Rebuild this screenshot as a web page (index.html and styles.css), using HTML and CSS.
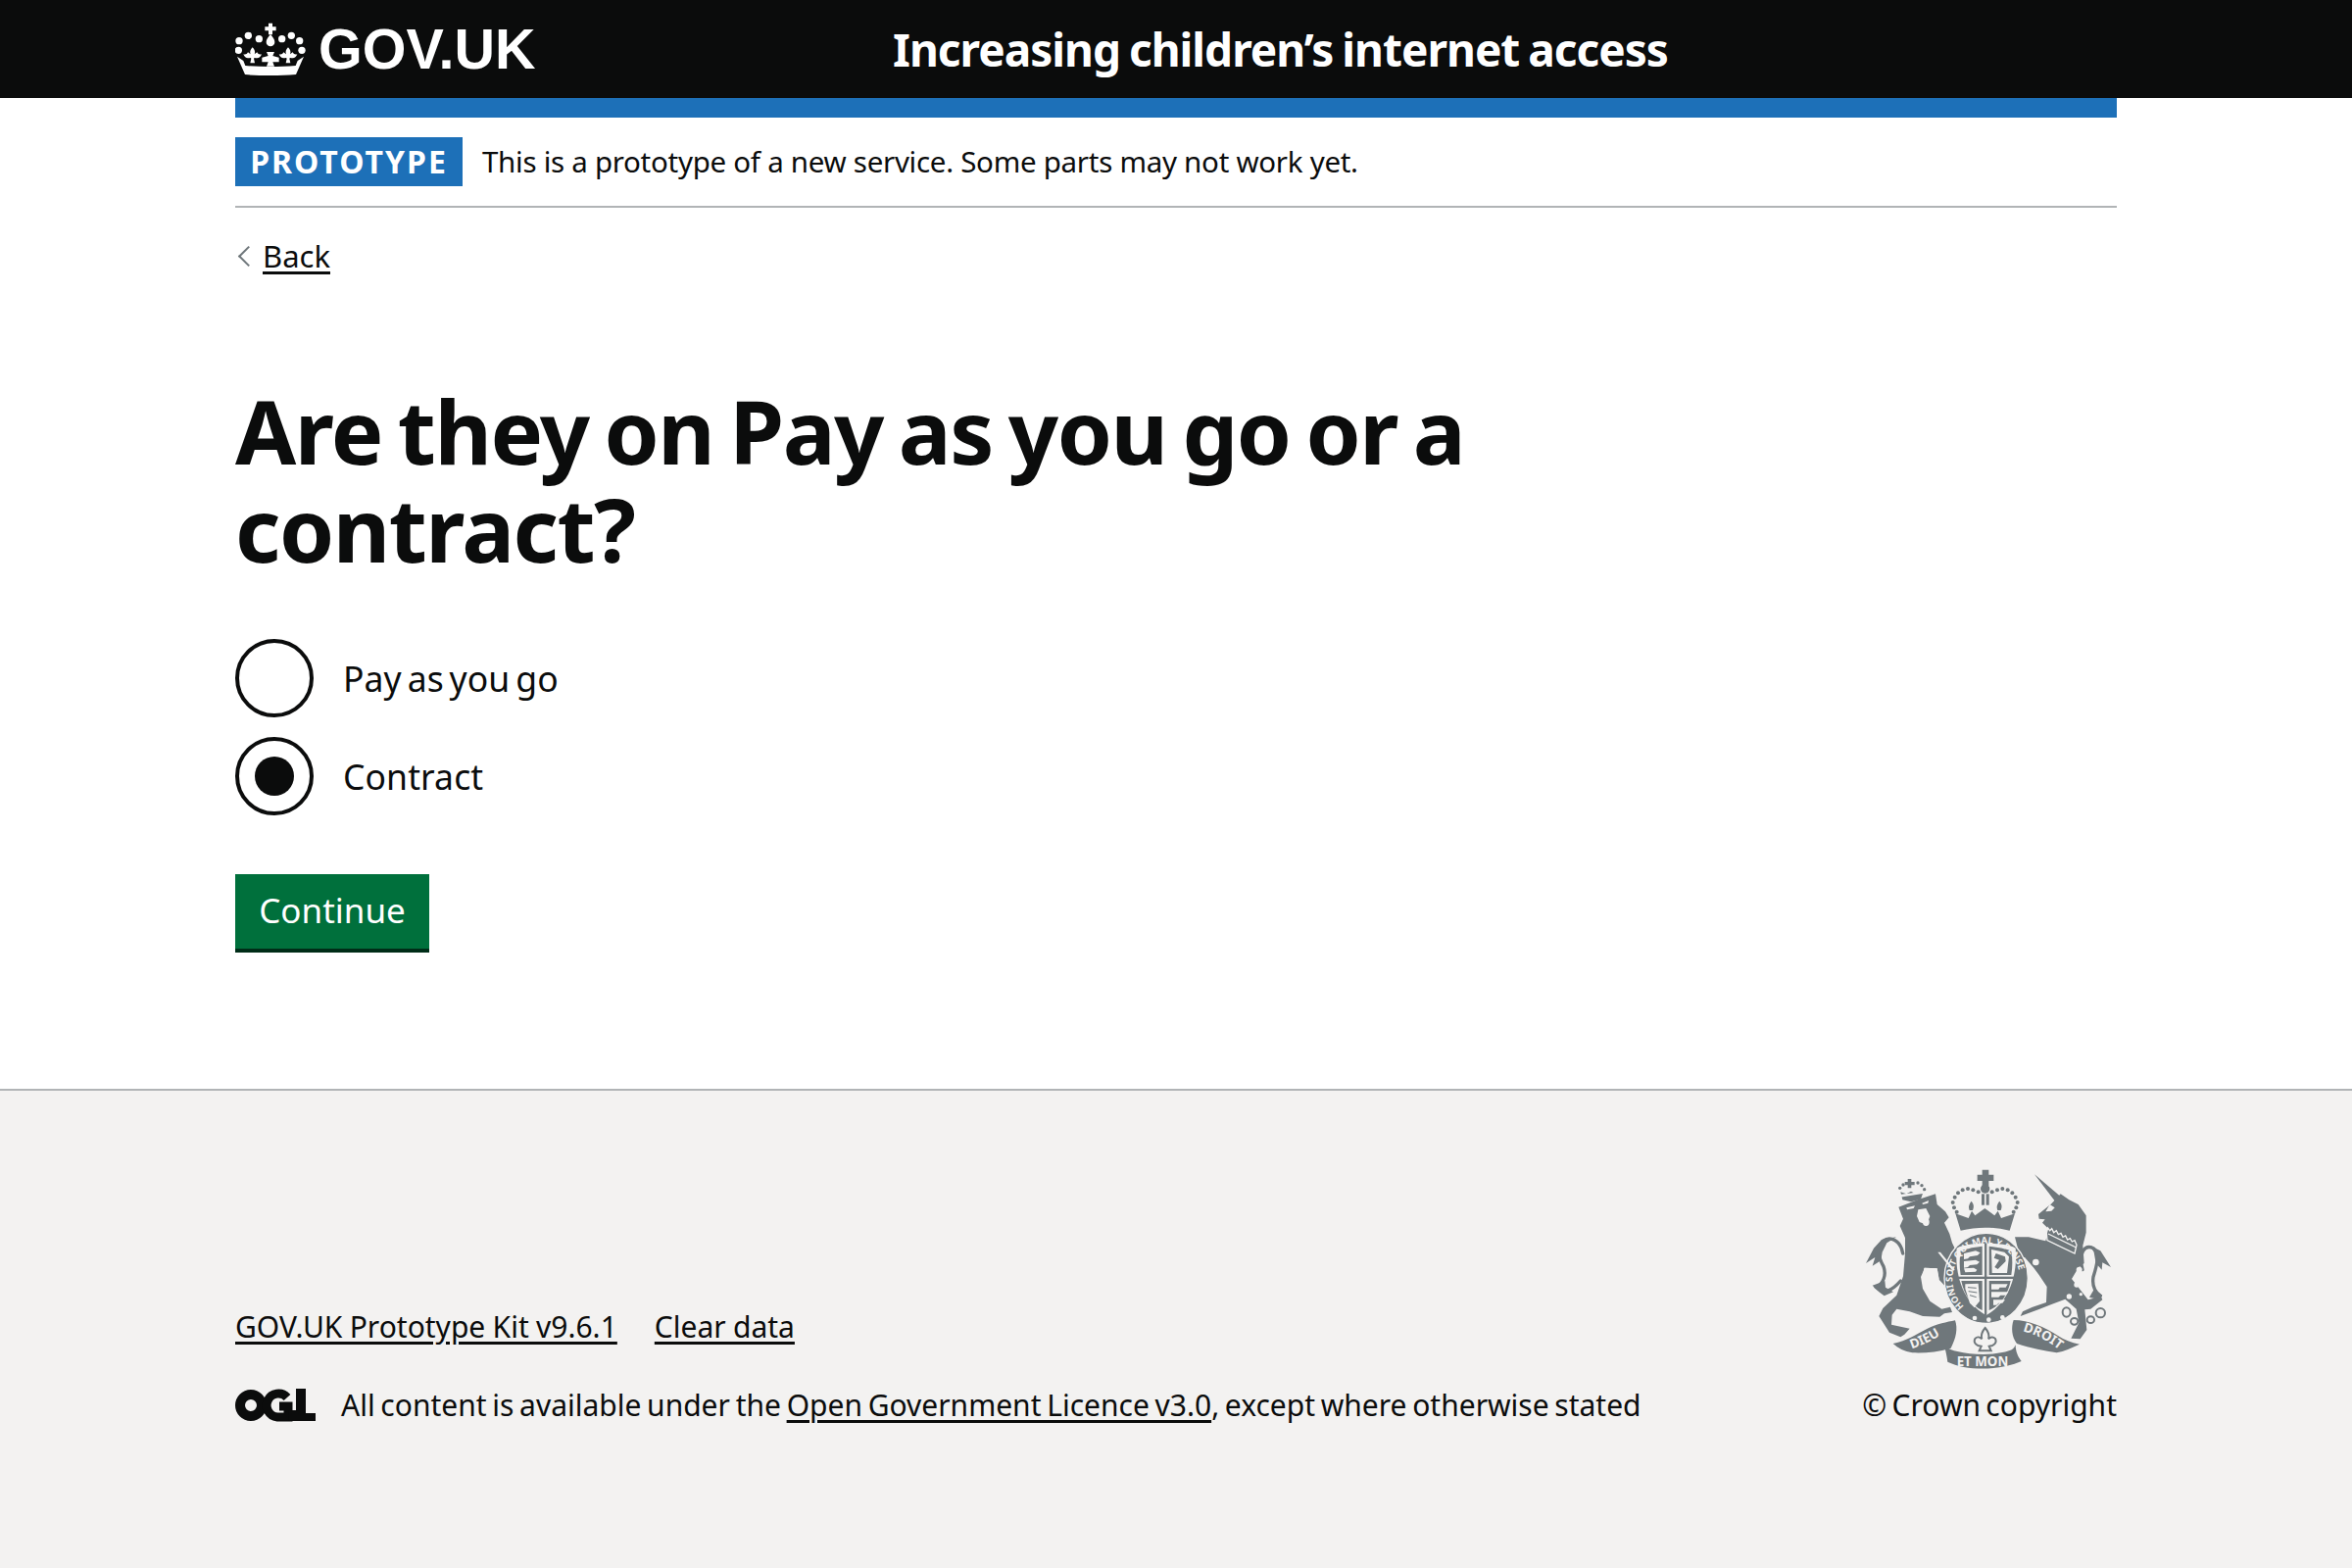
FILE: index.html
```html
<!DOCTYPE html>
<html lang="en">
<head>
<meta charset="utf-8">
<title>Are they on Pay as you go or a contract?</title>
<link rel="stylesheet" href="styles.css">
</head>
<body>
<header class="header">
  <div class="container header-inner">
    <a class="logo" href="#">
      <svg class="crown" viewBox="60 62 216 162" aria-hidden="true">
        <g fill="#fff">
          <path d="M162 64h12v11h11v12h-11v12h-12V87h-11V75h11z"/>
          <path d="M168 98c8 10 13 16 13 24a13 13 0 0 1-26 0c0-8 5-14 13-24z"/>
          <circle cx="100" cy="102" r="11"/><circle cx="133" cy="112" r="11"/>
          <circle cx="203" cy="112" r="11"/><circle cx="232" cy="102" r="11"/>
          <circle cx="72" cy="118" r="11"/><circle cx="257" cy="118" r="11"/>
          <circle cx="70" cy="147" r="11"/><circle cx="264" cy="147" r="11"/>
          <path d="M113 138c7 8 9 13 6 21l8-6c3 6 8 8 14 6-3 8-8 12-14 12-5 0-8-3-10 1l3 14h-14l3-14c-2-4-5-1-10-1-6 0-11-4-14-12 6 2 11 0 14-6l8 6c-3-8-1-13 6-21z"/>
          <path d="M222 138c7 8 9 13 6 21l8-6c3 6 8 8 14 6-3 8-8 12-14 12-5 0-8-3-10 1l3 14h-14l3-14c-2-4-5-1-10-1-6 0-11-4-14-12 6 2 11 0 14-6l8 6c-3-8-1-13 6-21z"/>
          <path d="M156 152h24l-5 12 19 5v14h-19l5 13h-24l5-13h-19v-14l19-5z"/>
          <path d="M66 166l19 13 6 15c25 2 52 3 77 3s52-1 77-3l6-15 19-13-24 55c-26 3-52 3-78 3s-52 0-78-3z"/>
        </g>
      </svg>
      <span class="logo-text">GOV.UK</span>
    </a>
    <a class="service-name" href="#">Increasing children’s internet access</a>
  </div>
</header>

<div class="container">
  <div class="blue-bar"></div>
  <div class="phase-banner">
    <strong class="tag">Prototype</strong>
    <span class="phase-text">This is a prototype of a new service. Some parts may not work yet.</span>
  </div>
  <a class="back-link" href="#"><span class="chevron"></span><span class="back-text">Back</span></a>

  <main class="main">
    <h1 class="heading">Are they on Pay as you go or a contract?</h1>
    <div class="radios">
      <label class="radio"><span class="radio-circle"></span><span class="radio-label">Pay as you go</span></label>
      <label class="radio"><span class="radio-circle is-checked"></span><span class="radio-label">Contract</span></label>
    </div>
    <button class="button" type="button">Continue</button>
  </main>
</div>

<footer class="footer">
  <div class="container footer-inner">
    <div class="footer-left">
      <div class="footer-links">
        <a href="#">GOV.UK Prototype Kit v9.6.1</a>
        <a href="#">Clear data</a>
      </div>
      <div class="licence">
        <svg class="ogl" viewBox="0 0 82 34" aria-hidden="true">
          <circle cx="16" cy="17" r="11" fill="none" stroke="#0b0c0c" stroke-width="10"/>
          <path d="M53 9A12 12 0 1 0 43 29H54V18H45" fill="none" stroke="#0b0c0c" stroke-width="9"/>
          <path d="M55 22h7V0h10v25h10v8H54z" fill="#0b0c0c"/>
        </svg>
        <span class="licence-text">All content is available under the <a href="#">Open Government Licence v3.0</a>, except where otherwise stated</span>
      </div>
    </div>
    <div class="footer-right">
      <svg class="crest" viewBox="0 0 900 690" aria-hidden="true">
        <g fill="#6f777b">
          <g fill="none" stroke="#6f777b" stroke-linecap="round">
            <path stroke-width="10" d="M185 300C178 258 146 246 124 262C106 282 110 312 126 340C136 368 124 392 104 404C128 426 152 414 178 384"/>
            <path stroke-width="10" d="M735 350C722 296 742 272 768 284C790 300 778 340 768 372C764 398 770 416 790 430"/>
          </g>
          <path d="M165 250L120 258 96 284 72 330 100 312 92 338 118 322 122 296 136 268z"/>
          <path d="M92 398L130 384 132 404 156 418 128 430 112 418z"/>
          <path d="M758 276L790 292 822 342 796 328 794 350 776 330 770 296z"/>
          <path d="M770 410L796 428 780 440 756 434z"/>
          <path d="M172 158L230 136 285 118 290 150 315 172 326 190 312 206 328 240 336 268 352 300 346 330 350 372 342 398 316 402 296 380 290 346 252 344 240 372 246 408 268 446 304 470 330 464 336 480 312 484 298 494 246 492 206 478 166 470 152 488 150 518 206 530 190 548 178 556 144 542 112 492 124 468 166 428 186 370 192 300 192 252 176 216 186 194z"/>
          <path d="M200 72h11v9h10v10h-10v9h-11v-9h-9V81h9z"/>
          <path d="M178 112l18 6 14-8 14 8 24-8-8 24-30 8-26-6z"/>
          <path d="M174 120L248 110 250 116 176 128z" fill="#f3f2f1"/>
          <circle cx="176" cy="100" r="5"/><circle cx="186" cy="90" r="5"/><circle cx="231" cy="84" r="5"/><circle cx="243" cy="92" r="5"/><circle cx="251" cy="104" r="5"/>
          <path d="M588 58L668 126 652 142z"/>
          <path d="M600 180L640 148 668 118 694 136 722 150 746 184 746 236 736 276 740 330 722 344 702 378 752 442 792 432 796 442 760 470 742 472 748 534 728 562 700 560 724 512 716 470 682 440 640 456 600 472 545 492 552 478 582 464 624 450 626 402 602 366 584 342 558 312 544 312 528 250 570 250 622 262 632 226 612 206 620 196 602 194z"/>
          <path d="M635 150L650 160 640 170 622 172z" fill="#f3f2f1"/>
          <path d="M625 238l4-16 6 8 6-6 6 12 8-6 6 12 8-4 6 12 8-4 6 12 8-4 6 10 8-4 6 14-6 26-84-40z" stroke="#f3f2f1" stroke-width="4"/>
          <path d="M630 240l86 42" stroke="#f3f2f1" stroke-width="4"/>
          <path d="M428 44h20v15h15v19h-15v15h-20V78h-15V59h15z"/>
          <circle cx="437" cy="102" r="14"/>
          <rect x="426" y="118" width="9" height="34"/><rect x="440" y="118" width="9" height="34"/>
          <path d="M346 178l40 14 10-22 10 14 30-22 30 22 10-14 10 22 42-14-16 52c-50-12-100-12-150 0z"/>
          <path d="M395 140c8 10 8 18 4 28h-10c-4-10-2-18 6-28zM481 140c8 10 8 18 4 28h-10c-4-10-2-18 6-28z"/>
          <circle cx="416" cy="112" r="6"/><circle cx="400" cy="106" r="6"/><circle cx="384" cy="102" r="6"/><circle cx="368" cy="106" r="6"/><circle cx="354" cy="115" r="6"/><circle cx="344" cy="128" r="6"/><circle cx="338" cy="144" r="6"/><circle cx="342" cy="160" r="6"/><circle cx="350" cy="173" r="6"/>
          <circle cx="458" cy="112" r="6"/><circle cx="474" cy="106" r="6"/><circle cx="490" cy="102" r="6"/><circle cx="506" cy="106" r="6"/><circle cx="520" cy="115" r="6"/><circle cx="530" cy="128" r="6"/><circle cx="536" cy="144" r="6"/><circle cx="532" cy="160" r="6"/><circle cx="524" cy="173" r="6"/>
          <ellipse cx="440" cy="376" rx="128" ry="138" stroke="#f3f2f1" stroke-width="4"/>
        </g>
        <g fill="#f3f2f1">
          <path d="M292 296l8 0 44 54-6 4z"/>
          <path d="M232 166l24-4 12 24-10 26-22-8-8-18z"/>
          <ellipse cx="256" cy="204" rx="10" ry="12"/>
          <path d="M196 160l26-6-4 8-20 4zM244 146l20-8-2 8-16 4z"/>
          <path d="M250 344l40 2 6 34-10-2-30 0-10-8z"/>
          <circle cx="603" cy="240" r="10"/><circle cx="592" cy="327" r="10"/>
          <circle cx="725" cy="350" r="9"/><circle cx="717" cy="396" r="8"/><circle cx="694" cy="432" r="8"/><circle cx="730" cy="425" r="5"/>
        </g>
        <g fill="none" stroke="#6f777b" stroke-width="6">
          <ellipse cx="686" cy="480" rx="12" ry="14"/><ellipse cx="710" cy="508" rx="11" ry="10"/><ellipse cx="760" cy="503" rx="11" ry="10"/><circle cx="790" cy="482" r="14"/>
        </g>
        <path fill="#f3f2f1" d="M350 284c30-20 150-20 180 0 6 66-10 160-90 206-80-46-96-140-90-206z"/>
        <g fill="#6f777b">
          <rect x="435" y="268" width="7" height="222"/>
          <rect x="350" y="371" width="180" height="7"/>
          <path d="M362 292c22-8 46-12 66-14v88h-66c-4-26-4-50 0-74zM449 278c22 2 44 6 68 14 4 24 4 48 0 74h-68zM364 384h64v90c-32-14-56-48-64-90zM449 384h66c-8 42-32 76-66 90z"/>
        </g>
        <g fill="#f3f2f1">
          <path d="M372 300l36-8 14 6-8 8-24 4-6 6-12 2zM372 324l36-4 12 6-8 8-22 2-6 6-12 2zM372 346l30-2 10 6-4 6-32 2z"/>
          <path d="M456 288l40 8 14 14-6 50-46 0zM470 300l-6 14 16 6-14 22 10 6 24-24-2-14z" fill-rule="evenodd"/>
          <path d="M376 394l40-2 4 54-16 20-14-14-14-44z"/>
          <path d="M456 394h50l-6 10h-18l-4 6h-22zM456 418h52l-8 10h-16l-6 6h-22zM462 442h36l-8 10h-12l-6 6h-10z"/>
        </g>
        <g fill="none" stroke="#6f777b" stroke-width="3"><path d="M384 404l26 2M386 416l26 4M390 428l20 6"/></g>
        <g fill="#6f777b">
          <path d="M155 576C200 566 220 550 260 530C290 516 320 510 345 505C354 530 348 560 332 590C290 602 250 606 214 604C190 600 170 590 155 576z"/>
          <path d="M312 582C324 592 338 598 352 600C400 612 470 612 510 598C520 596 526 590 530 580C530 600 538 618 548 630C480 660 380 660 322 632C320 616 316 598 312 582z"/>
          <path d="M524 504C570 504 620 525 660 552C680 565 700 573 726 578C700 590 680 600 656 604C620 598 576 590 534 576C518 556 516 526 524 504z"/>
          <path d="M437 528c10 12 14 22 10 34 6-6 14-8 20-2 6 8 2 18-8 22l-10 2 6 14h-36l6-14-10-2c-10-4-14-14-8-22 6-6 14-4 20 2-4-12 0-22 10-34z" fill="#f3f2f1" stroke="#6f777b" stroke-width="6"/>
          <circle cx="405" cy="498" r="7" fill="#f3f2f1"/><circle cx="448" cy="503" r="7" fill="#f3f2f1"/><circle cx="490" cy="496" r="7" fill="#f3f2f1"/>
        </g>
        <g class="crest-text">
          <defs>
            <path id="ring" d="M372 462A103 110 0 1 1 508 462"/>
            <path id="ribbon-l" d="M212 592C250 580 290 560 322 535"/>
            <path id="ribbon-r" d="M552 538C590 546 635 572 668 598"/>
          </defs>
          <text class="crest-ring"><textPath href="#ring">HONI SOIT QUI MAL Y PENSE</textPath></text>
          <text class="crest-ribbon"><textPath href="#ribbon-l">DIEU</textPath></text>
          <text class="crest-ribbon"><textPath href="#ribbon-r">DROIT</textPath></text>
          <text class="crest-ribbon" x="350" y="644">ET MON</text>
        </g>
      </svg>
      <span class="copyright">© Crown copyright</span>
    </div>
  </div>
</footer>
</body>
</html>
```

FILE: styles.css
```css
* { box-sizing: border-box; }
html, body { margin: 0; padding: 0; }
body {
  min-height: 1600px;
  display: flex;
  flex-direction: column;
  font-family: "Noto Sans", "Liberation Sans", sans-serif;
  color: #0b0c0c;
  background: #fff;
}
a { color: inherit; }
.container { width: 1920px; margin: 0 auto; }

.header { background: #0b0c0c; height: 100px; flex: none; }
.header-inner { display: flex; align-items: center; height: 100%; }
.logo {
  width: 671px;
  display: flex;
  align-items: center;
  gap: 13px;
  text-decoration: none;
  color: #fff;
}
.crown { width: 72px; height: 54px; }
.logo-text {
  font-family: "Liberation Sans", sans-serif;
  font-weight: 700;
  font-size: 57.5px;
  line-height: 94px;
}
.service-name {
  font-weight: 700;
  font-size: 46px;
  letter-spacing: -1px;
  word-spacing: -2px;
  color: #fff;
  text-decoration: none;
  line-height: 94px;
}

.blue-bar { height: 20px; background: #1d70b8; }
.phase-banner {
  display: flex;
  align-items: center;
  height: 92px;
  border-bottom: 2px solid #b1b4b6;
}
.tag {
  display: block;
  background: #1d70b8;
  color: #fff;
  text-transform: uppercase;
  font-size: 32px;
  line-height: 50px;
  height: 50px;
  width: 232px;
  text-align: center;
  letter-spacing: 2px;
  margin-right: 20px;
}
.phase-text { font-size: 29.5px; line-height: 50px; letter-spacing: -0.28px; }

.back-link {
  display: flex;
  align-items: center;
  margin-top: 29px;
  font-size: 31px;
  line-height: 40px;
  height: 40px;
  text-decoration: none;
}
.chevron {
  width: 15px;
  height: 15px;
  border-left: 2px solid #6f777b;
  border-bottom: 2px solid #6f777b;
  transform: rotate(45deg);
  margin-left: 6px;
  margin-right: 7px;
}
.back-text { text-decoration: underline; text-underline-offset: 4px; }

.main { padding-top: 108px; }
.heading {
  margin: 0 0 63px;
  width: 1300px;
  font-size: 90px;
  line-height: 100px;
  font-weight: 700;
  letter-spacing: -1.5px;
  word-spacing: -6px;
}
.radios { display: flex; flex-direction: column; gap: 20px; }
.radio { display: flex; align-items: center; height: 80px; }
.radio-circle {
  flex: none;
  display: flex;
  align-items: center;
  justify-content: center;
  width: 80px;
  height: 80px;
  border: 4px solid #0b0c0c;
  border-radius: 50%;
  margin-right: 30px;
}
.is-checked::after {
  content: "";
  width: 40px;
  height: 40px;
  border-radius: 50%;
  background: #0b0c0c;
}
.radio-label { font-size: 35.5px; line-height: 50px; letter-spacing: 0.1px; word-spacing: -3.5px; }
.button {
  display: block;
  margin-top: 60px;
  width: 198px;
  height: 80px;
  padding: 0 0 4px;
  border: 0;
  border-bottom: 4px solid #002d18;
  background: #00703c;
  color: #fff;
  font: inherit;
  font-size: 35px;
}

.footer {
  flex: 1;
  margin-top: 139px;
  background: #f3f2f1;
  border-top: 2px solid #b1b4b6;
}
.footer-inner {
  display: flex;
  justify-content: space-between;
  align-items: flex-end;
  padding-top: 66px;
}
.footer-left { display: flex; flex-direction: column; gap: 40px; }
.footer-links { display: flex; gap: 38px; font-size: 30px; line-height: 40px; word-spacing: -0.5px; }
.footer-links a, .licence-text a { text-underline-offset: 4px; }
.licence { display: flex; align-items: center; gap: 26px; }
.ogl { width: 82px; height: 34px; }
.licence-text { font-size: 30px; line-height: 40px; word-spacing: -2.1px; }
.footer-right { display: flex; flex-direction: column; align-items: flex-end; }
.crest { width: 300px; height: 230px; margin: 0 -20px 5px 0; }
.copyright { font-size: 30px; line-height: 40px; word-spacing: -2.5px; }
.crest-text { font-family: "Noto Sans", sans-serif; font-weight: 700; fill: #f3f2f1; }
.crest-ring { font-size: 28px; }
.crest-ribbon { font-size: 40px; }
```
